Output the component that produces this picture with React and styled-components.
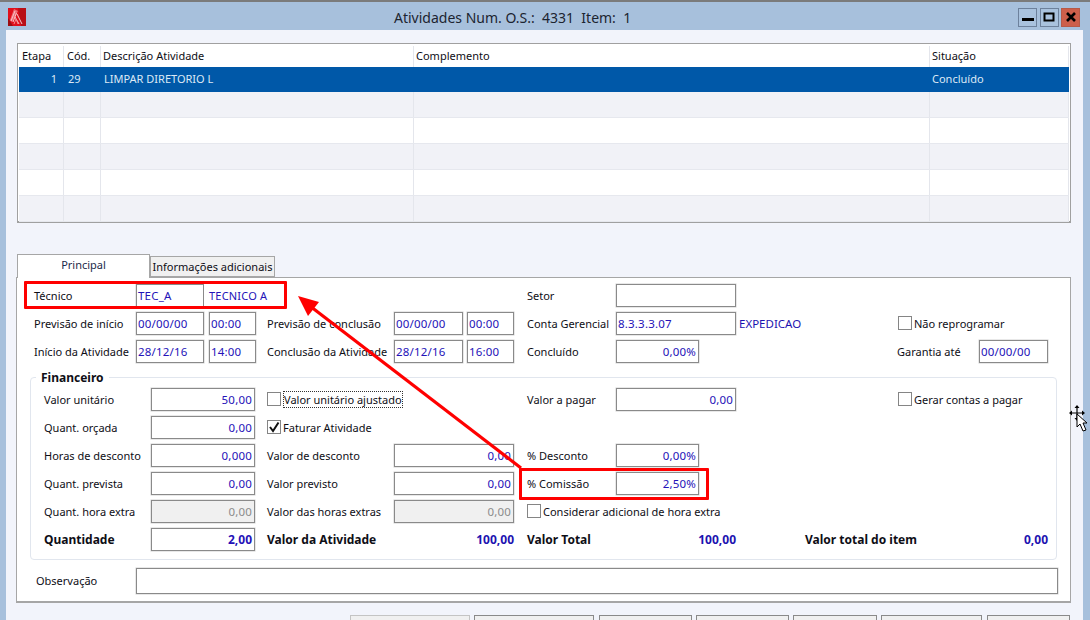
import React from 'react';
import styled, { createGlobalStyle } from 'styled-components';

const GlobalStyle = createGlobalStyle`
  html, body { margin: 0; padding: 0; background: #a7c0dc; }
  * { box-sizing: border-box; }
`;

const App = () => (
  <Window>
    <GlobalStyle />
    <TitleBar>
      <AppIcon />
      <Title>{'Atividades Num. O.S.:  4331  Item:  1'}</Title>
      <Controls>
        <Control><svg width="12" height="12"><rect x="0" y="7" width="12" height="3" fill="#000" /></svg></Control>
        <Control><svg width="12" height="12"><rect x="1.5" y="2.5" width="9" height="7" fill="none" stroke="#000" strokeWidth="2" /></svg></Control>
        <Control $close><svg width="12" height="12"><path d="M2 2 L10 10 M10 2 L2 10" stroke="#000" strokeWidth="2.6" /></svg></Control>
      </Controls>
    </TitleBar>

    <Body>
      <Grid>
        <GridHead>
          <Cell $w={45}>Etapa</Cell>
          <Cell $w={37}>Cód.</Cell>
          <Cell $w={313} $pl={2}>Descrição Atividade</Cell>
          <Cell $w={516} $pl={2}>Complemento</Cell>
          <Cell $w={139} $pl={2}>Situação</Cell>
        </GridHead>
        <GridRow $selected $h={25}>
          <Cell $w={45} $right>1</Cell>
          <Cell $w={37} $pl={4}>29</Cell>
          <Cell $w={313}>LIMPAR DIRETORIO L</Cell>
          <Cell $w={516} />
          <Cell $w={139} $pl={2}>Concluído</Cell>
        </GridRow>
        {[true, false, true, false, true].map((shaded, i) => (
          <GridRow key={i} $shaded={shaded} $h={26}>
            <Cell $w={45} />
            <Cell $w={37} />
            <Cell $w={313} />
            <Cell $w={516} />
            <Cell $w={139} />
          </GridRow>
        ))}
      </Grid>

      <Tabs>
        <Tab $active>Principal</Tab>
        <Tab>Informações adicionais</Tab>
      </Tabs>

      <Panel>
        <Row>
          <Label $w={102}>Técnico</Label>
          <Field $w={68}>TEC_A</Field>
          <Field $w={80} $plain>TECNICO A</Field>
          <Spacer $w={243} />
          <Label $w={89}>Setor</Label>
          <Field $w={120} />
        </Row>
        <Row>
          <Label $w={102}>Previsão de início</Label>
          <Field $w={68}>00/00/00</Field>
          <Spacer $w={5} />
          <Field $w={47}>00:00</Field>
          <Spacer $w={11} />
          <Label $w={127}>Previsão de conclusão</Label>
          <Field $w={69}>00/00/00</Field>
          <Spacer $w={4} />
          <Field $w={47}>00:00</Field>
          <Spacer $w={13} />
          <Label $w={89}>Conta Gerencial</Label>
          <Field $w={120}>8.3.3.3.07</Field>
          <Spacer $w={3} />
          <Value $w={159} $left>EXPEDICAO</Value>
          <Check $w={120}><Box />Não reprogramar</Check>
        </Row>
        <Row>
          <Label $w={102}>Início da Atividade</Label>
          <Field $w={68}>28/12/16</Field>
          <Spacer $w={5} />
          <Field $w={47}>14:00</Field>
          <Spacer $w={11} />
          <Label $w={127}>Conclusão da Atividade</Label>
          <Field $w={69}>28/12/16</Field>
          <Spacer $w={4} />
          <Field $w={47}>16:00</Field>
          <Spacer $w={13} />
          <Label $w={89}>Concluído</Label>
          <Field $w={83} $right>0,00%</Field>
          <Spacer $w={198} />
          <Label $w={82}>Garantia até</Label>
          <Field $w={69}>00/00/00</Field>
        </Row>

        <Group>
          <Legend>Financeiro</Legend>
          <Row>
            <Label $w={107}>Valor unitário</Label>
            <Field $w={104} $right>50,00</Field>
            <Spacer $w={12} />
            <Check $w={127}><Box /><Focused>Valor unitário ajustado</Focused></Check>
            <Spacer $w={133} />
            <Label $w={89}>Valor a pagar</Label>
            <Field $w={120} $right>0,00</Field>
            <Spacer $w={162} />
            <Check $w={140}><Box />Gerar contas a pagar</Check>
          </Row>
          <Row>
            <Label $w={107}>Quant. orçada</Label>
            <Field $w={104} $right>0,00</Field>
            <Spacer $w={12} />
            <Check $w={127}>
              <Box>
                <svg width="12" height="12" viewBox="0 0 12 12"><path d="M2 6 L5 10 L10.5 1.5" fill="none" stroke="#111" strokeWidth="2" /></svg>
              </Box>
              Faturar Atividade
            </Check>
          </Row>
          <Row>
            <Label $w={107}>Horas de desconto</Label>
            <Field $w={104} $right>0,000</Field>
            <Spacer $w={12} />
            <Label $w={127}>Valor de desconto</Label>
            <Field $w={120} $right>0,00</Field>
            <Spacer $w={13} />
            <Label $w={89}>% Desconto</Label>
            <Field $w={83} $right>0,00%</Field>
          </Row>
          <Row>
            <Label $w={107}>Quant. prevista</Label>
            <Field $w={104} $right>0,00</Field>
            <Spacer $w={12} />
            <Label $w={127}>Valor previsto</Label>
            <Field $w={120} $right>0,00</Field>
            <Spacer $w={13} />
            <Label $w={89}>% Comissão</Label>
            <Field $w={83} $right>2,50%</Field>
          </Row>
          <Row>
            <Label $w={107}>Quant. hora extra</Label>
            <Field $w={104} $right $off>0,00</Field>
            <Spacer $w={12} />
            <Label $w={127}>Valor das horas extras</Label>
            <Field $w={120} $right $off>0,00</Field>
            <Spacer $w={13} />
            <Check $w={220}><Box />Considerar adicional de hora extra</Check>
          </Row>
          <Row>
            <Label $w={107} $bold>Quantidade</Label>
            <Field $w={104} $right $bold>2,00</Field>
            <Spacer $w={12} />
            <Label $w={127} $bold>Valor da Atividade</Label>
            <Value $w={120}>100,00</Value>
            <Spacer $w={13} />
            <Label $w={89} $bold>Valor Total</Label>
            <Value $w={120}>100,00</Value>
            <Spacer $w={69} />
            <Label $w={180} $bold>Valor total do item</Label>
            <Value $w={63}>0,00</Value>
          </Row>
        </Group>

        <ObsRow>
          <ObsLabel>Observação</ObsLabel>
          <Field $w={922} />
        </ObsRow>
      </Panel>

      <Buttons>
        <Button $w={120} $default />
        <Button $w={120} $mr={1} />
        <Button $w={93} />
        <Button $w={93} />
        <Button $w={84} />
        <Button $w={101} $mr={1} />
        <Button $w={83} />
      </Buttons>
    </Body>

    <RedBox $x={24} $y={281} $w={263} $h={28} />
    <RedBox $x={519} $y={468} $w={190} $h={32} />
    <Overlay width="1090" height="620">
      <path d="M521 468 L306 303" stroke="#f00" strokeWidth="3.2" fill="none" />
      <path d="M298 296 L319 302 L308 316 Z" fill="#f00" />
    </Overlay>
    <Cursor width="24" height="30" viewBox="0 0 24 30">
      <path d="M9 1 L9 15 M2 8 L16 8" stroke="#000" strokeWidth="1.2" />
      <path d="M9 0 L6.5 3 L11.5 3 Z M9 16 L6.5 13 L11.5 13 Z M1 8 L4 5.5 L4 10.5 Z M17 8 L14 5.5 L14 10.5 Z" fill="#000" />
      <path d="M9 9 L9 22 L12 19 L15 26 L18 25 L15 18 L19 18 Z" fill="#fff" stroke="#000" strokeWidth="1" />
    </Cursor>
  </Window>
);

const AppIcon = () => (
  <IconSvg width="18" height="18" viewBox="0 0 18 18">
    <rect width="18" height="18" fill="#e0101c" />
    <path d="M10 0 L18 0 L18 18 L13 18 Z" fill="#b80f16" />
    <path d="M0 18 L0 10 L5 18 Z" fill="#9c0d12" />
    <path d="M2 12 L6 1 L10 3 L8 7 L4 14 Z" fill="#ee6d76" />
    <path d="M3 13 L7 3 M5 14 L8.5 5 M9 6 L14 16 M7 9 L11 16" fill="none" stroke="#f9c4c8" strokeWidth="1" />
    <path d="M6 16 L8 11 L10 16" fill="none" stroke="#f48a90" strokeWidth="1" />
  </IconSvg>
);

export default App;

const Window = styled.div`
  position: relative;
  width: 1090px;
  height: 620px;
  overflow: hidden;
  background: #a7c0dc;
  border-top: 2px solid #7b7b7b;
  font-family: "Noto Sans", "Liberation Sans", sans-serif;
  font-size: 11px;
  color: #0e0e16;
`;

const TitleBar = styled.div`
  display: flex;
  align-items: center;
  height: 28px;
  padding: 2px 10px 0 8px;
`;

const IconSvg = styled.svg`
  flex: none;
`;

const Title = styled.div`
  margin-left: 368px;
  font-size: 14px;
  white-space: pre;
  color: #1c2430;
`;

const Controls = styled.div`
  display: flex;
  gap: 2.5px;
  margin-left: auto;
`;

const Control = styled.div`
  width: 19px;
  height: 19px;
  display: flex;
  align-items: center;
  justify-content: center;
  border: 1px solid ${(p) => (p.$close ? '#b75a48' : '#6d819c')};
  background: ${(p) => (p.$close ? '#cd5f4b' : '#a9c2de')};
`;

const Body = styled.div`
  margin: 0 7px 0 6px;
  height: 600px;
  background: #f2f4fb;
  padding: 13px 12px 0 10px;
`;

const Grid = styled.div`
  margin-left: 1px;
  width: 1054px;
  height: 180px;
  border: 1px solid #a0a0a0;
  border-bottom-width: 2px;
  padding: 2px 1px 0;
  background: #fff;
`;

const GridHead = styled.div`
  display: flex;
  height: 21px;
  align-items: center;
`;

const GridRow = styled.div`
  display: flex;
  align-items: center;
  height: ${(p) => p.$h}px;
  background: ${(p) => (p.$selected ? '#0058a8' : p.$shaded ? '#f1f2f7' : '#fff')};
  color: ${(p) => (p.$selected ? '#dce9f6' : 'inherit')};
  border-bottom: ${(p) => (p.$selected ? 'none' : '1px solid #e6e8ee')};
  & > div {
    border-right-color: ${(p) => (p.$selected ? 'transparent' : '#e4e6ec')};
  }
`;

const Cell = styled.div`
  width: ${(p) => p.$w}px;
  height: 100%;
  display: flex;
  align-items: center;
  justify-content: ${(p) => (p.$right ? 'flex-end' : 'flex-start')};
  padding: 0 6px 2px ${(p) => p.$pl ?? 3}px;
  border-right: 1px solid #e4e6ec;
  white-space: nowrap;
`;

const Tabs = styled.div`
  display: flex;
  align-items: flex-end;
  margin: 31px 0 0 1px;
  height: 23px;
  position: relative;
  z-index: 1;
`;

const Tab = styled.div`
  width: ${(p) => (p.$active ? 133 : 125)}px;
  height: ${(p) => (p.$active ? 24 : 21)}px;
  margin-bottom: ${(p) => (p.$active ? -1 : 0)}px;
  display: flex;
  align-items: center;
  justify-content: center;
  padding-bottom: ${(p) => (p.$active ? 5 : 0)}px;
  border: 1px solid #a6a6a6;
  border-bottom: ${(p) => (p.$active ? 'none' : '1px solid #a6a6a6')};
  background: ${(p) => (p.$active ? '#fff' : '#f0f0f0')};
  color: ${(p) => (p.$active ? '#1a2a4a' : 'inherit')};
  white-space: nowrap;
`;

const Panel = styled.div`
  width: 1055px;
  height: 326px;
  border: 1px solid #a6a6a6;
  border-bottom-width: 2px;
  background: #fff;
  padding: 6px 0 0 17px;
`;

const Row = styled.div`
  display: flex;
  align-items: center;
  height: 23px;
  margin-bottom: 5px;
`;

const Label = styled.div`
  width: ${(p) => p.$w}px;
  flex: none;
  white-space: nowrap;
  padding-bottom: ${(p) => (p.$bold ? 0 : 1)}px;
  font-size: ${(p) => (p.$bold ? 12 : 11)}px;
  font-weight: ${(p) => (p.$bold ? 700 : 400)};
`;

const Spacer = styled.div`
  width: ${(p) => p.$w}px;
  flex: none;
`;

const Field = styled.div`
  width: ${(p) => p.$w}px;
  flex: none;
  height: 100%;
  display: flex;
  align-items: center;
  justify-content: ${(p) => (p.$right ? 'flex-end' : 'flex-start')};
  padding: 0 2px ${(p) => (p.$bold ? 0 : 1)}px ${(p) => (p.$plain ? 5 : 1)}px;
  border: ${(p) => (p.$plain ? 'none' : '1px solid #8a8a8a')};
  box-shadow: ${(p) => (p.$plain ? 'none' : '0 0 0 0.5px rgba(150, 150, 150, 0.45)')};
  background: ${(p) => (p.$off ? '#f0f0f0' : '#fff')};
  color: ${(p) => (p.$off ? '#8c8c8c' : '#2412b8')};
  font-size: ${(p) => (p.$bold ? 12 : p.$plain ? 11 : 11.5)}px;
  font-weight: ${(p) => (p.$bold ? 700 : 400)};
  letter-spacing: ${(p) => (p.$bold ? 0 : 0.2)}px;
  white-space: nowrap;
`;

const Value = styled.div`
  width: ${(p) => p.$w}px;
  flex: none;
  text-align: ${(p) => (p.$left ? 'left' : 'right')};
  font-size: ${(p) => (p.$left ? 11.5 : 12)}px;
  font-weight: ${(p) => (p.$left ? 400 : 700)};
  color: #1c12b0;
  white-space: nowrap;
`;

const Check = styled.div`
  width: ${(p) => p.$w}px;
  flex: none;
  display: flex;
  align-items: center;
  gap: 2px;
  padding-bottom: 1px;
  white-space: nowrap;
`;

const Box = styled.span`
  width: 14px;
  height: 14px;
  flex: none;
  display: flex;
  align-items: center;
  justify-content: center;
  border: 1px solid #858585;
  background: #fff;
`;

const Focused = styled.span`
  margin-left: 1px;
  outline: 1px dotted #333;
`;

const Group = styled.div`
  position: relative;
  width: 1027px;
  height: 183px;
  margin: 14px 0 0 -4px;
  padding: 10px 0 0 13px;
  border: 1px solid #e1e6ee;
  border-radius: 4px;
`;

const Legend = styled.div`
  position: absolute;
  top: -7px;
  left: 5px;
  padding: 0 5px;
  background: #fff;
  font-size: 12px;
  font-weight: 700;
  line-height: 14px;
`;

const ObsRow = styled.div`
  display: flex;
  align-items: center;
  height: 26px;
  margin-top: 8px;
`;

const ObsLabel = styled.div`
  width: 102px;
  flex: none;
  padding: 0 0 2px 2px;
`;

const Buttons = styled.div`
  display: flex;
  gap: 4px;
  margin: 12px 0 0 334px;
`;

const Button = styled.div`
  width: ${(p) => p.$w}px;
  height: 10px;
  margin-right: ${(p) => p.$mr || 0}px;
  background: #f0f0f0;
  border: 1px solid ${(p) => (p.$default ? '#c4c4c4' : '#8a8a8a')};
`;

const RedBox = styled.div`
  position: absolute;
  left: ${(p) => p.$x}px;
  top: ${(p) => p.$y - 2}px;
  width: ${(p) => p.$w}px;
  height: ${(p) => p.$h}px;
  border: 3px solid #f00;
  border-radius: 1px;
  pointer-events: none;
`;

const Overlay = styled.svg`
  position: absolute;
  left: 0;
  top: -2px;
  pointer-events: none;
`;

const Cursor = styled.svg`
  position: absolute;
  left: 1068px;
  top: 403px;
`;
